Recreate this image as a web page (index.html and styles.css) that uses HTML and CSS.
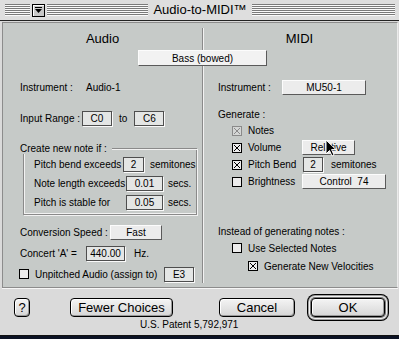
FILE: index.html
```html
<!DOCTYPE html>
<html lang="en">
<head>
  <meta charset="UTF-8">
  <title>Audio-to-MIDI</title>
  <link rel="stylesheet" href="styles.css">
</head>
<body>
<div class="window">

  <div class="titlebar">
    <div class="tb-side">
      <span class="stripes short"></span>
      <span class="collapse">
        <svg width="13" height="13" viewBox="0 0 13 13" shape-rendering="crispEdges">
          <rect x="0.5" y="0.5" width="12" height="12" fill="#c8c8c8" stroke="#000"/>
          <path d="M1.5 11.5V1.5H11.5" stroke="#fff" fill="none"/>
          <rect x="3" y="3" width="7" height="1" fill="#000"/>
          <path d="M3 5H10L6.5 9Z" fill="#000" shape-rendering="auto"/>
        </svg>
      </span>
      <span class="stripes"></span>
    </div>
    <div class="title">Audio-to-MIDI™</div>
    <div class="tb-side"><span class="stripes"></span></div>
  </div>

  <div class="body">
    <div class="panel">
      <div class="head head-audio">Audio</div>
      <div class="head head-midi">MIDI</div>
      <div class="divider"></div>
      <div class="preset-row"><span class="popup preset">Bass (bowed)</span></div>

      <!-- audio side -->
      <div class="col col-audio">
        <div class="row r-inst"><span class="lbl w66">Instrument :</span><span>Audio-1</span></div>
        <div class="row r-range">
          <span class="lbl w62">Input Range :</span>
          <span class="field w30">C0</span><span class="to">to</span><span class="field w30">C6</span>
        </div>
        <div class="row group-head"><span class="lbl">Create new note if :</span><span class="rule"></span></div>
        <div class="group">
          <div class="row"><span class="lbl w89">Pitch bend exceeds</span><span class="field w21">2</span><span class="unit u6">semitones</span></div>
          <div class="row"><span class="lbl w92">Note length exceeds</span><span class="field w37">0.01</span><span class="unit u5">secs.</span></div>
          <div class="row"><span class="lbl w92">Pitch is stable for</span><span class="field w37">0.05</span><span class="unit u5">secs.</span></div>
        </div>
        <div class="row r-speed"><span class="lbl w90">Conversion Speed :</span><span class="popup w52">Fast</span></div>
        <div class="row r-concert"><span class="lbl w66">Concert 'A' =</span><span class="field w39">440.00</span><span class="unit u9">Hz.</span></div>
        <div class="row r-unpitched">
          <svg class="cb" width="10" height="10" viewBox="0 0 10 10" shape-rendering="crispEdges"><rect x="0.5" y="0.5" width="9" height="9" fill="#ececec" stroke="#000"/></svg>
          <span class="lbl w129">Unpitched Audio (assign to)</span><span class="field w30">E3</span>
        </div>
      </div>

      <!-- midi side -->
      <div class="col col-midi">
        <div class="row r-inst"><span class="lbl w64">Instrument :</span><span class="popup w84">MU50-1</span></div>
        <div class="row r-gen">Generate :</div>
        <div class="crow">
          <svg class="cb" width="10" height="10" viewBox="0 0 10 10" shape-rendering="crispEdges"><rect x="0.5" y="0.5" width="9" height="9" fill="#d4d6d5" stroke="#8a8a8a"/><path d="M2 2L8 8M8 2L2 8" stroke="#8a8a8a"/></svg>
          <span class="clbl">Notes</span>
        </div>
        <div class="crow">
          <svg class="cb" width="10" height="10" viewBox="0 0 10 10" shape-rendering="crispEdges"><rect x="0.5" y="0.5" width="9" height="9" fill="#ececec" stroke="#000"/><path d="M2 2L8 8M8 2L2 8" stroke="#000"/></svg>
          <span class="clbl">Volume</span><span class="popup w53 rel">Relative</span>
          <svg class="cursor" width="12" height="18" viewBox="0 0 12 18"><path d="M1 1V15L4.5 11.5L7 17L9 16L6.6 10.6H11Z" fill="#000" stroke="#fff" stroke-width="1" stroke-linejoin="miter"/></svg>
        </div>
        <div class="crow">
          <svg class="cb" width="10" height="10" viewBox="0 0 10 10" shape-rendering="crispEdges"><rect x="0.5" y="0.5" width="9" height="9" fill="#ececec" stroke="#000"/><path d="M2 2L8 8M8 2L2 8" stroke="#000"/></svg>
          <span class="clbl w55">Pitch Bend</span><span class="field w20">2</span><span class="unit u8">semitones</span>
        </div>
        <div class="crow">
          <svg class="cb" width="10" height="10" viewBox="0 0 10 10" shape-rendering="crispEdges"><rect x="0.5" y="0.5" width="9" height="9" fill="#ececec" stroke="#000"/></svg>
          <span class="clbl">Brightness</span><span class="popup w84">Control&nbsp; 74</span>
        </div>
        <div class="row r-instead">Instead of generating notes :</div>
        <div class="row r-use">
          <svg class="cb" width="10" height="10" viewBox="0 0 10 10" shape-rendering="crispEdges"><rect x="0.5" y="0.5" width="9" height="9" fill="#ececec" stroke="#000"/></svg>
          <span>Use Selected Notes</span>
        </div>
        <div class="row r-vel">
          <svg class="cb" width="10" height="10" viewBox="0 0 10 10" shape-rendering="crispEdges"><rect x="0.5" y="0.5" width="9" height="9" fill="#ececec" stroke="#000"/><path d="M2 2L8 8M8 2L2 8" stroke="#000"/></svg>
          <span>Generate New Velocities</span>
        </div>
      </div>
    </div>

    <div class="footer">
      <div class="buttons">
        <span class="btn help">?</span>
        <span class="btn fewer">Fewer Choices</span>
        <span class="btn cancel">Cancel</span>
        <span class="btn ok">OK</span>
      </div>
      <div class="patent">U.S. Patent 5,792,971</div>
    </div>
  </div>

</div>
</body>
</html>
```

FILE: styles.css
```css
* {
  box-sizing: border-box;
}
body {
  margin: 0;
  background: #0b1224;
  font-family: "Liberation Sans", Arial, sans-serif;
  font-size: 10px;
  color: #000;
}
.window {
  width: 399px;
  background: #dadada;
  border-bottom: 1px solid #111;
}

/* title bar */
.titlebar {
  height: 21px;
  display: grid;
  grid-template-columns: 1fr auto 1fr;
  align-items: center;
  padding: 0 4px 0 5px;
  background: #dedede;
  border-bottom: 1px solid #222;
}
.tb-side {
  display: flex;
  align-items: center;
}
.stripes {
  flex: 1;
  height: 12px;
  background: repeating-linear-gradient(to bottom, #7a7a7a 0 1px, #fafafa 1px 2px);
}
.stripes.short {
  flex: none;
  width: 25px;
}
.collapse {
  display: flex;
  margin: 0 2px;
}
.title {
  padding: 0 5px;
  font-size: 13px;
  line-height: 14px;
}

/* main panel */
.body {
  padding: 1px 1px 0 2px;
}
.panel {
  height: 266px;
  display: grid;
  grid-template-columns: 199px 1fr;
  grid-template-rows: 27px 16px 1fr;
  background: #c6cac8;
  border: 1px solid #8c8c8c;
  border-right-color: #ececec;
}
.head {
  grid-row: 1;
  text-align: center;
  padding-top: 8px;
  font-size: 13px;
  line-height: 15px;
}
.head-audio { grid-column: 1; }
.head-midi { grid-column: 2; }
.divider {
  grid-column: 2;
  grid-row: 1 / 4;
  justify-self: start;
  width: 0;
  margin: 5px 0 4px;
  border-left: 1px solid #8a8a8a;
  box-shadow: 1px 0 0 #f2f2f2;
}
.preset-row {
  grid-column: 1 / 3;
  grid-row: 2;
  display: flex;
  z-index: 1;
}
.col {
  grid-row: 3;
  display: flex;
  flex-direction: column;
}
.col-audio {
  grid-column: 1;
  padding: 0 5px 0 17px;
}
.col-midi {
  grid-column: 2;
  padding-left: 16px;
}

.row {
  display: flex;
  align-items: center;
  height: 16px;
  white-space: nowrap;
}
.lbl {
  flex: none;
}
.w62 { width: 62px; }
.w64 { width: 64px; }
.w66 { width: 66px; }
.w89 { width: 89px; }
.w90 { width: 90px; }
.w92 { width: 92px; }
.w129 { width: 129px; }

/* controls */
.field {
  display: flex;
  align-items: center;
  justify-content: center;
  flex: none;
  height: 15px;
  background: #e4e6e5;
  border: 1px solid #4e4e4e;
  box-shadow: 1px 1px 0 #fafafa;
}
.field.w20 { width: 20px; }
.field.w21 { width: 21px; }
.field.w30 { width: 30px; }
.field.w37 { width: 37px; }
.field.w39 { width: 39px; }
.popup {
  display: flex;
  align-items: center;
  justify-content: center;
  flex: none;
  height: 15px;
  background: #ececec;
  border: 1px solid;
  border-color: #fcfcfc #5a5a5a #5a5a5a #fcfcfc;
}
.popup.w52 { width: 52px; }
.popup.w53 { width: 53px; }
.popup.w84 { width: 84px; }
.preset {
  width: 129px;
  height: 16px;
  margin-left: 135px;
  background: #f2f2f2;
}
.to {
  margin: 0 7px;
}
.unit.u5 { margin-left: 5px; }
.unit.u6 { margin-left: 6px; }
.unit.u8 { margin-left: 8px; }
.unit.u9 { margin-left: 9px; }
.cb {
  flex: none;
  margin-right: 6px;
}

/* audio rows */
.r-inst { margin-top: 13px; }
.r-range { margin-top: 15px; }
.group-head {
  margin-top: 14px;
  position: relative;
  z-index: 1;
}
.group-head .lbl {
  background: #c6cac8;
}
.rule {
  flex: 1;
  margin-left: 5px;
  border-top: 1px solid #8a8a8a;
  box-shadow: 0 1px 0 #f2f2f2;
}
.group {
  display: flex;
  flex-direction: column;
  gap: 3px;
  margin: -8px 0 0 3px;
  padding: 8px 0 4px 10px;
  border: 1px solid #8a8a8a;
  border-top: none;
  box-shadow: 1px 1px 0 #f2f2f2, inset 1px -1px 0 #f2f2f2;
}
.r-speed { margin-top: 9px; }
.r-concert { margin-top: 5px; }
.r-unpitched {
  margin-top: 5px;
  margin-left: -1px;
}

/* midi rows */
.r-gen { margin-top: 11px; }
.crow {
  display: flex;
  align-items: center;
  height: 17px;
  padding-left: 14px;
  position: relative;
  white-space: nowrap;
}
.clbl {
  width: 54px;
  flex: none;
}
.clbl.w55 { width: 55px; }
.cursor {
  position: absolute;
  left: 107px;
  top: 0;
}
.r-instead { margin-top: 33px; }
.r-use {
  margin-top: 1px;
  padding-left: 14px;
}
.r-vel {
  margin-top: 2px;
  padding-left: 30px;
}

/* footer */
.footer {
  height: 47px;
  padding: 10px 0 0 12px;
  box-shadow: inset 0 1px 0 #f6f6f6;
}
.buttons {
  display: flex;
  align-items: center;
}
.btn {
  display: flex;
  align-items: center;
  justify-content: center;
  height: 19px;
  font-size: 13px;
  background: linear-gradient(#f4f4f4, #d6d6d6);
  border: 1px solid #000;
  border-radius: 4px;
  box-shadow: inset 1px 1px 0 #fff, inset -1px -1px 0 #9a9a9a;
}
.help { width: 16px; }
.fewer {
  width: 103px;
  margin-left: 40px;
}
.cancel {
  width: 76px;
  margin-left: 46px;
}
.ok {
  width: 74px;
  margin-left: 16px;
  box-shadow: inset 1px 1px 0 #fff, inset -1px -1px 0 #9a9a9a,
    0 0 0 1px #7a7a7a, 0 0 0 2px #f2f2f2, 0 0 0 3px #a0a0a0, 0 0 0 4px #000;
}
.patent {
  margin-top: 3px;
  padding-left: 126px;
  line-height: 10px;
}
```
